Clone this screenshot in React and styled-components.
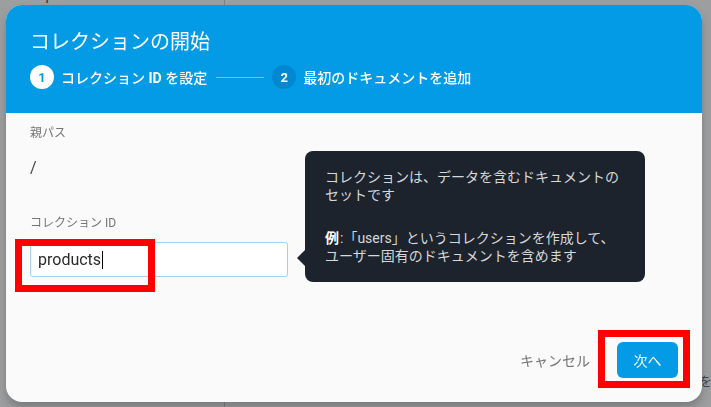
import React from "react";
import styled, { createGlobalStyle } from "styled-components";

const Global = createGlobalStyle`
  html, body { margin: 0; padding: 0; overflow: hidden; }
  body { font-family: Roboto, "Noto Sans CJK JP", sans-serif; background: #f8f9fa; }
  * { box-sizing: border-box; }
`;

const Backdrop = styled.div`
  width: 711px;
  height: 407px;
  display: grid;
  grid-template-columns: 225px 1fr;
`;

const SideBar = styled.div`
  border-right: 1px solid #c4c6c9;
  overflow: hidden;
`;

const ProjectName = styled.div`
  margin-top: -13px;
  font-size: 14px;
  line-height: 16px;
  color: #3c4043;
  white-space: nowrap;
`;

const MainPane = styled.div`
  display: flex;
  flex-direction: column;
  justify-content: flex-end;
  padding: 0 0 17px 474px;
  overflow: hidden;
`;

const BgText = styled.div`
  font-size: 13px;
  color: #5f6368;
  white-space: nowrap;
`;

const Scrim = styled.div`
  position: fixed;
  inset: 0;
  background: rgba(32, 33, 36, 0.42);
  display: flex;
  align-items: flex-start;
  padding: 5px 0 0 6px;
`;

const Dialog = styled.div`
  position: relative;
  width: 696px;
  height: 397px;
  border-radius: 16px;
  background: #fafafa;
  overflow: hidden;
  display: flex;
  flex-direction: column;
  box-shadow: 0 6px 10px rgba(0, 0, 0, 0.22);
`;

const Header = styled.div`
  background: #039be5;
  padding: 23px 24px 24px 24px;
  color: #fff;
`;

const Title = styled.h1`
  margin: 0;
  font-size: 20px;
  line-height: 28px;
  font-weight: 400;
`;

const Stepper = styled.div`
  display: flex;
  align-items: center;
  margin-top: 9px;
`;

const StepCircle = styled.div`
  width: 24px;
  height: 24px;
  border-radius: 50%;
  display: flex;
  align-items: center;
  justify-content: center;
  font-size: 13px;
  font-weight: 700;
  background: ${(p) => (p.$active ? "#ffffff" : "#0288d1")};
  color: ${(p) => (p.$active ? "#039be5" : "#ffffff")};
  flex: none;
`;

const StepLabel = styled.span`
  margin-left: 7px;
  font-size: 14px;
  font-weight: 500;
  white-space: nowrap;
  b { font-weight: 700; }
`;

const StepLine = styled.div`
  width: 48px;
  height: 1px;
  margin: 0 8px 0 9px;
  background: rgba(255, 255, 255, 0.4);
`;

const Body = styled.div`
  position: relative;
  flex: 1;
  padding: 12px 24px 0 24px;
`;

const FieldLabel = styled.div`
  font-size: 12px;
  line-height: 16px;
  color: #757575;
  margin-top: ${(p) => p.$gap || 0}px;
`;

const PathValue = styled.div`
  font-size: 16px;
  line-height: 24px;
  color: #424242;
  margin-top: 15px;
`;

const TextBox = styled.div`
  margin-top: 11px;
  width: 258px;
  height: 35px;
  border: 1px solid #9fd3ee;
  border-radius: 3px;
  background: #fff;
  display: flex;
  align-items: center;
  padding: 0 7px;
  font-size: 16px;
  color: #2a2a2a;
`;

const Caret = styled.span`
  display: inline-block;
  width: 1px;
  height: 18px;
  background: #000;
  margin-left: 1px;
`;

const Tooltip = styled.div`
  position: absolute;
  left: 299px;
  top: 38px;
  width: 340px;
  padding: 17px 20px 17px 20px;
  background: #1c232c;
  border-radius: 8px;
  color: #d6d8da;
  font-size: 14px;
  line-height: 18px;
  &::before {
    content: "";
    position: absolute;
    left: -8px;
    top: 99px;
    border-style: solid;
    border-width: 8px 8px 8px 0;
    border-color: transparent #1c232c transparent transparent;
  }
`;

const TipPara = styled.p`
  margin: ${(p) => (p.$first ? "0" : "25px 0 0")};
  b { color: #fff; font-weight: 700; margin-right: 1px; }
`;

const Footer = styled.div`
  display: flex;
  justify-content: flex-end;
  align-items: center;
  padding: 0 24px 24px 0;
`;

const TextButton = styled.button`
  border: none;
  background: transparent;
  font-family: inherit;
  font-size: 14px;
  color: #757575;
  padding: 0 8px;
  height: 36px;
  margin-right: 19px;
`;

const PrimaryButton = styled.button`
  border: none;
  background: #039be5;
  color: #fff;
  font-family: inherit;
  font-size: 14px;
  height: 36px;
  padding: 0 16px;
  min-width: 61px;
  border-radius: 6px;
`;

const Highlight = styled.div`
  position: absolute;
  border: 7px solid #ff0000;
  left: ${(p) => p.$x}px;
  top: ${(p) => p.$y}px;
  width: ${(p) => p.$w}px;
  height: ${(p) => p.$h}px;
  pointer-events: none;
`;

export default function App() {
  return (
    <>
      <Global />
      <Backdrop>
        <SideBar>
          <ProjectName>und-ship-23b412</ProjectName>
        </SideBar>
        <MainPane>
          <BgText>を追加</BgText>
        </MainPane>
      </Backdrop>
      <Scrim>
        <Dialog>
          <Header>
            <Title>コレクションの開始</Title>
            <Stepper>
              <StepCircle $active>1</StepCircle>
              <StepLabel>
                コレクション <b>ID</b> を設定
              </StepLabel>
              <StepLine />
              <StepCircle>2</StepCircle>
              <StepLabel>最初のドキュメントを追加</StepLabel>
            </Stepper>
          </Header>
          <Body>
            <FieldLabel>親パス</FieldLabel>
            <PathValue>/</PathValue>
            <FieldLabel $gap={35}>コレクション ID</FieldLabel>
            <TextBox>
              products
              <Caret />
            </TextBox>
            <Tooltip>
              <TipPara $first>
                コレクションは、データを含むドキュメントのセットです
              </TipPara>
              <TipPara>
                <b>例</b>:「users」というコレクションを作成して、ユーザー固有のドキュメントを含めます
              </TipPara>
            </Tooltip>
          </Body>
          <Footer>
            <TextButton>キャンセル</TextButton>
            <PrimaryButton>次へ</PrimaryButton>
          </Footer>
        </Dialog>
        <Highlight $x={15} $y={239} $w={140} $h={53} />
        <Highlight $x={598} $y={330} $w={92} $h={58} />
      </Scrim>
    </>
  );
}
